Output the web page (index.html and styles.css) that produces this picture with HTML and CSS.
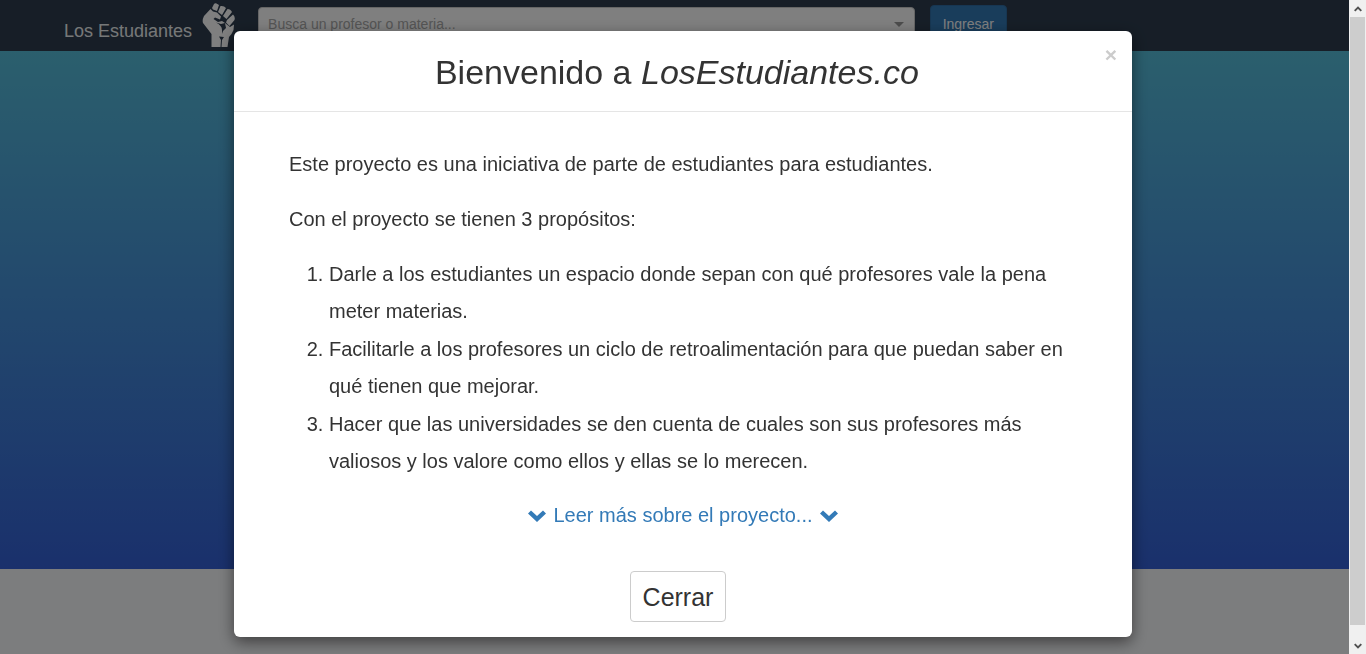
FILE: index.html
```html
<!DOCTYPE html>
<html lang="es">
<head>
<meta charset="utf-8">
<meta name="viewport" content="width=device-width, initial-scale=1">
<title>Los Estudiantes</title>
<link rel="stylesheet" href="styles.css">
</head>
<body>
<div class="window">
  <div class="page">
    <header class="navbar">
      <a class="brand" href="#">Los Estudiantes</a>
      <svg class="fist" viewBox="0 0 33 44" aria-hidden="true">
        <path class="fist-fill" d="M10 5 L12 1 Q13 0 14.500 .5 L17 2 L15 8 L11 6.500 Z M18.500 3 Q22 2.500 24 5 L20 12 L16 9 Z M25.500 6 Q28.500 6 30 9 L24.500 16 L21 13 Z M31 11.500 Q33.500 14 32.500 17 L27.500 23 L24 19.500 L25 17 Z M8.500 6 L11 8.500 L15 9.500 L19 13.500 L18 16.500 L13 14.500 L11.500 16 L16 19 L20 18 L23 20 L28 24 L32 21.500 L31.500 27 Q30 31 27 34 L25.500 44 H9.500 L9.500 31 L1 20 Q0 17 2 13 Z"/>
        <path class="fist-cut" d="M14 19.500 Q20 22.500 20 27 L20 31 Q21 27 24 25 L23 20 L19 21 Z M17 33.500 L22 34 L20 37 L19.500 44 L18.500 44 L19 37 Z"/>
      </svg>
      <div class="search">
        <input class="search-input" type="text" aria-label="Buscar" placeholder="Busca un profesor o materia...">
        <span class="caret"></span>
      </div>
      <button class="login" type="button">Ingresar</button>
    </header>
    <main class="hero"></main>
  </div>
  <div class="scrollbar" aria-hidden="true">
    <svg class="arrow" viewBox="0 0 17 17"><path d="M5 11 L8.500 7.500 L12 11"/></svg>
    <div class="track"><div class="thumb"></div></div>
    <svg class="arrow" viewBox="0 0 17 17"><path d="M5 7 L8.500 10.500 L12 7"/></svg>
  </div>
</div>
<div class="backdrop"></div>
<div class="overlay">
  <section class="modal" role="dialog" aria-modal="true" aria-labelledby="title">
    <div class="modal-header">
      <h1 class="modal-title" id="title">Bienvenido a <em>LosEstudiantes.co</em></h1>
      <button class="close" type="button" aria-label="Cerrar ventana">×</button>
    </div>
    <div class="modal-body">
      <p>Este proyecto es una iniciativa de parte de estudiantes para estudiantes.</p>
      <p>Con el proyecto se tienen 3 propósitos:</p>
      <ol class="goals">
        <li>Darle a los estudiantes un espacio donde sepan con qué profesores vale la pena meter materias.</li>
        <li>Facilitarle a los profesores un ciclo de retroalimentación para que puedan saber en qué tienen que mejorar.</li>
        <li>Hacer que las universidades se den cuenta de cuales son sus profesores más valiosos y los valore como ellos y ellas se lo merecen.</li>
      </ol>
      <a class="more" href="#">
        <svg class="chevron" viewBox="0 0 18 12" aria-hidden="true"><path d="M0 3.500 L3 .5 L9 6 L15 .5 L18 3.500 L9 12 Z"/></svg>
        <span>Leer más sobre el proyecto...</span>
        <svg class="chevron" viewBox="0 0 18 12" aria-hidden="true"><path d="M0 3.500 L3 .5 L9 6 L15 .5 L18 3.500 L9 12 Z"/></svg>
      </a>
    </div>
    <div class="modal-footer">
      <button class="dismiss" type="button">Cerrar</button>
    </div>
  </section>
</div>
</body>
</html>
```
FILE: styles.css
```css
* { box-sizing: border-box; }

body {
  margin: 0;
  overflow: hidden;
  color: #333;
  font-family: "Liberation Sans", Arial, sans-serif;
  font-size: 14px;
}

.window {
  display: flex;
  height: 100vh;
}

.page {
  flex: 1;
  display: flex;
  flex-direction: column;
  background: #f9fafc;
}

.navbar {
  display: flex;
  align-items: flex-start;
  height: 51px;
  padding: 3px 342px 0 64px;
  background: #2e3d4f;
}

.brand {
  padding-top: 18px;
  color: #ecf0f1;
  font-size: 18px;
  line-height: 20px;
  text-decoration: none;
  white-space: nowrap;
}

.fist {
  flex: none;
  width: 33px;
  height: 44px;
  margin-left: 10px;
}

.fist-fill { fill: #fff; }
.fist-cut { fill: #2e3d4f; }

.search {
  flex: 1;
  display: flex;
  align-items: center;
  height: 34px;
  margin: 4px 15px 0 23px;
  padding: 0 10px 0 9px;
  border: 1px solid #ccc;
  border-radius: 4px;
  background: #fff;
}

.search-input {
  flex: 1;
  min-width: 0;
  padding: 0;
  border: 0;
  outline: 0;
  background: transparent;
  font: inherit;
}

.search-input::placeholder { color: #aaa; }

.caret {
  border: 5px solid transparent;
  border-top-color: #999;
  border-bottom: 0;
}

.login {
  height: 38px;
  margin-top: 2px;
  padding: 0 12px;
  border: 1px solid #2e6da4;
  border-radius: 4px;
  background: #337ab7;
  color: #fff;
  font: inherit;
}

.hero {
  height: 518px;
  background: linear-gradient(#56bedb, #3461d9);
}

.scrollbar {
  display: flex;
  flex-direction: column;
  width: 17px;
  padding-left: 1px;
  background: #f0f0f0;
  position: relative;
  z-index: 2;
}

.arrow {
  width: 16px;
  height: 17px;
  fill: none;
  stroke: #505050;
  stroke-width: 2;
}

.track { flex: 1; }

.thumb {
  width: 15px;
  height: 98%;
  background: #cdcdcd;
}

.backdrop {
  position: fixed;
  inset: 0;
  background: rgba(0, 0, 0, .5);
}

.overlay {
  position: fixed;
  inset: 0;
  padding: 31px 16px;
}

.modal {
  max-width: 898px;
  margin: 0 auto;
  border-radius: 6px;
  background: #fff;
  box-shadow: 0 5px 15px rgba(0, 0, 0, .5);
}

.modal-header {
  display: flex;
  align-items: flex-start;
  padding: 15px;
  border-bottom: 1px solid #e5e5e5;
}

.modal-title {
  flex: 1;
  margin: 0;
  padding-top: 2px;
  font-size: 34px;
  font-weight: 400;
  line-height: 48px;
  text-align: center;
}

.close {
  padding: 0;
  border: 0;
  background: transparent;
  color: #ccc;
  font: bold 21px/18px "Liberation Sans", Arial, sans-serif;
}

.modal-body {
  padding: 34px 55px 0;
  font-size: 20px;
  line-height: 37px;
}

.modal-body p { margin: 0 0 18px; }

.goals {
  display: grid;
  gap: 1px;
  margin: 0 0 17px;
  padding-left: 40px;
}

.more {
  display: flex;
  justify-content: center;
  align-items: center;
  gap: 7px;
  color: #337ab7;
  text-decoration: none;
}

.chevron {
  width: 18px;
  height: 12px;
  fill: #337ab7;
}

.modal-footer {
  padding: 37px 10px 15px 0;
  text-align: center;
}

.dismiss {
  display: inline-block;
  vertical-align: top;
  padding: 7px 12px 5px;
  border: 1px solid #ccc;
  border-radius: 4px;
  background: #fff;
  color: #333;
  font: 25px/37px "Liberation Sans", Arial, sans-serif;
}
```
